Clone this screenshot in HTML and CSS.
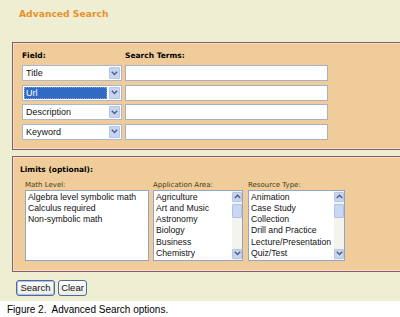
FILE: index.html
```html
<!DOCTYPE html>
<html lang="en">
<head>
  <meta charset="UTF-8">
  <title>Advanced Search</title>
  <link rel="stylesheet" href="styles.css">
</head>
<body>
  <!-- Search form area -->
  <div class="page">
    <h1 class="title">Advanced Search</h1>

    <!-- Field / terms panel -->
    <div class="panel fields">
      <div class="field-grid">
        <div class="label">Field:</div>
        <div class="label">Search Terms:</div>

        <div class="select"><span class="value">Title</span><span class="arrow"><svg width="7" height="5" viewBox="0 0 7 5"><path d="M0.8 0.8 L3.5 3.6 L6.2 0.8" fill="none" stroke="#4d6185" stroke-width="1.4"/></svg></span></div>
        <div class="text-input"></div>

        <div class="select focused"><span class="value">Url</span><span class="arrow"><svg width="7" height="5" viewBox="0 0 7 5"><path d="M0.8 0.8 L3.5 3.6 L6.2 0.8" fill="none" stroke="#4d6185" stroke-width="1.4"/></svg></span></div>
        <div class="text-input"></div>

        <div class="select"><span class="value">Description</span><span class="arrow"><svg width="7" height="5" viewBox="0 0 7 5"><path d="M0.8 0.8 L3.5 3.6 L6.2 0.8" fill="none" stroke="#4d6185" stroke-width="1.4"/></svg></span></div>
        <div class="text-input"></div>

        <div class="select"><span class="value">Keyword</span><span class="arrow"><svg width="7" height="5" viewBox="0 0 7 5"><path d="M0.8 0.8 L3.5 3.6 L6.2 0.8" fill="none" stroke="#4d6185" stroke-width="1.4"/></svg></span></div>
        <div class="text-input"></div>
      </div>
    </div>

    <!-- Limits panel -->
    <div class="panel limits">
      <div class="label">Limits (optional):</div>
      <div class="limit-row">
        <div class="limit math">
          <div class="sublabel">Math Level:</div>
          <div class="listbox">
            <ul class="items">
              <li>Algebra level symbolic math</li>
              <li>Calculus required</li>
              <li>Non-symbolic math</li>
            </ul>
          </div>
        </div>

        <div class="limit area">
          <div class="sublabel">Application Area:</div>
          <div class="listbox">
            <ul class="items">
              <li>Agriculture</li>
              <li>Art and Music</li>
              <li>Astronomy</li>
              <li>Biology</li>
              <li>Business</li>
              <li>Chemistry</li>
            </ul>
            <div class="scrollbar">
              <span class="sb-btn"><svg width="7" height="5" viewBox="0 0 7 5"><path d="M0.8 4 L3.5 1.2 L6.2 4" fill="none" stroke="#4d6185" stroke-width="1.4"/></svg></span>
              <span class="sb-thumb"></span>
              <span class="sb-btn bottom"><svg width="7" height="5" viewBox="0 0 7 5"><path d="M0.8 0.8 L3.5 3.6 L6.2 0.8" fill="none" stroke="#4d6185" stroke-width="1.4"/></svg></span>
            </div>
          </div>
        </div>

        <div class="limit resource">
          <div class="sublabel">Resource Type:</div>
          <div class="listbox">
            <ul class="items">
              <li>Animation</li>
              <li>Case Study</li>
              <li>Collection</li>
              <li>Drill and Practice</li>
              <li>Lecture/Presentation</li>
              <li>Quiz/Test</li>
            </ul>
            <div class="scrollbar">
              <span class="sb-btn"><svg width="7" height="5" viewBox="0 0 7 5"><path d="M0.8 4 L3.5 1.2 L6.2 4" fill="none" stroke="#4d6185" stroke-width="1.4"/></svg></span>
              <span class="sb-thumb"></span>
              <span class="sb-btn bottom"><svg width="7" height="5" viewBox="0 0 7 5"><path d="M0.8 0.8 L3.5 3.6 L6.2 0.8" fill="none" stroke="#4d6185" stroke-width="1.4"/></svg></span>
            </div>
          </div>
        </div>
      </div>
    </div>

    <div class="buttons">
      <button class="btn default">Search</button>
      <button class="btn clear">Clear</button>
    </div>
  </div>

  <p class="caption">Figure 2.&nbsp; Advanced Search options.</p>
</body>
</html>
```

FILE: styles.css
```css
/* General Reset */
* {
  margin: 0;
  padding: 0;
  box-sizing: border-box;
}

body {
  background: #ffffff;
  font-family: 'DejaVu Sans', Verdana, sans-serif;
  color: #000;
  overflow: hidden;
}

/* Cream form area */
.page {
  background: #eeeed2;
  padding: 7px 0 5px 0;
}

.title {
  font-size: 9.2px;
  line-height: 14px;
  font-weight: bold;
  color: #e8912c;
  margin-left: 19px;
}

/* Tan panels with purple frame */
.panel {
  background: #efcc99;
  border: 1px solid #845a7c;
  border-right: none;
  box-shadow: inset 1px 1px 0 #f9e3b4, inset 0 -1px 0 #f9e3b4;
  margin-left: 12px;
}

.fields {
  margin-top: 21px;
  padding: 8px 0 9px 9px;
}

.limits {
  margin-top: 6px;
  padding: 8px 0 10px 7px;
}

.label {
  font-size: 7.5px;
  line-height: 10px;
  font-weight: bold;
}

/* Field rows */
.field-grid {
  display: grid;
  grid-template-columns: 100px 203px;
  column-gap: 3px;
  row-gap: 3.5px;
}

.field-grid .label {
  margin-bottom: 0.5px;
}

.select {
  height: 16px;
  background: #fff;
  border: 1px solid #a9b8cf;
  display: flex;
  align-items: center;
  padding: 1px;
  font-family: 'Liberation Sans', Arial, sans-serif;
  font-size: 9px;
  color: #111;
}

.select .value {
  flex: 1;
  height: 100%;
  display: flex;
  align-items: center;
  padding-left: 2px;
}

.select.focused .value {
  background: #316ac5;
  color: #fff;
  outline: 1px dotted #8aa4d0;
  outline-offset: -1px;
  margin-right: 2px;
}

.select .arrow {
  width: 11px;
  height: 100%;
  background: #c7d5f1;
  border: 1px solid #b6c6e8;
  border-radius: 1px;
  display: flex;
  align-items: center;
  justify-content: center;
}

.text-input {
  height: 16px;
  background: #fff;
  border: 1px solid #a5b2c4;
}

/* Limits lists */
.limit-row {
  display: flex;
  margin-top: 5px;
  margin-left: 5px;
}

.sublabel {
  font-size: 7px;
  line-height: 10px;
  color: #4a3b14;
}

.limit.math { width: 124px; margin-right: 4px; }
.limit.area { width: 90px; margin-right: 5px; }
.limit.resource { width: 97px; }

.listbox {
  height: 71px;
  background: #fff;
  border: 1px solid #8fa6c6;
  display: flex;
  overflow: hidden;
}

.items {
  list-style: none;
  flex: 1;
  padding: 1px 0 0 2px;
  font-family: 'Liberation Sans', Arial, sans-serif;
  font-size: 8.7px;
  line-height: 11.3px;
  color: #111;
  white-space: nowrap;
  overflow: hidden;
}

.scrollbar {
  width: 10px;
  background: #f4f3ee;
  display: flex;
  flex-direction: column;
  padding: 1px 0;
}

.sb-btn {
  height: 10px;
  background: #c7d5f1;
  border: 1px solid #b4c5e9;
  border-radius: 1px;
  display: flex;
  align-items: center;
  justify-content: center;
}

.sb-btn.bottom {
  margin-top: auto;
}

.sb-thumb {
  height: 14px;
  margin-top: 2px;
  background: #c9d7f4;
  border: 1px solid #b0c2e8;
  border-radius: 1px;
}

/* Buttons */
.buttons {
  display: flex;
  gap: 3px;
  margin: 8px 0 0 16px;
}

.btn {
  height: 16px;
  font-family: 'Liberation Sans', Arial, sans-serif;
  font-size: 9.5px;
  color: #111;
  background: linear-gradient(#ffffff, #ecebe4);
  border: 1px solid #4f6a96;
  border-radius: 3px;
  padding: 0;
}

.btn.default {
  width: 39px;
  box-shadow: inset 0 0 0 1px #a9c0ec;
}

.btn.clear {
  width: 29px;
}

.caption {
  font-family: 'Liberation Sans', Arial, sans-serif;
  font-size: 10px;
  line-height: 14px;
  margin: 2px 0 0 7px;
}
```
